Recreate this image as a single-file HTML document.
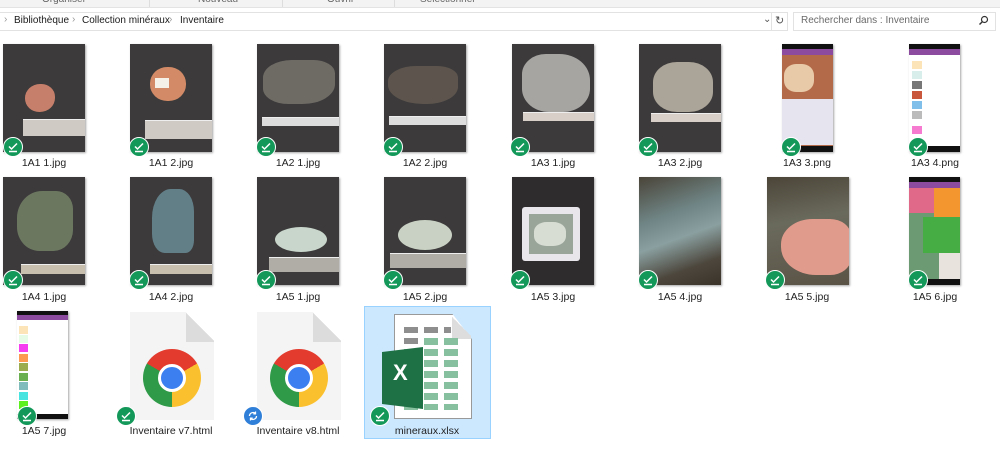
<!DOCTYPE html>
<html><head><meta charset="utf-8"><style>
body{margin:0;width:1000px;height:467px;background:#fff;position:relative;overflow:hidden;font-family:"Liberation Sans",sans-serif;font-size:11px;color:#1a1a1a}
.a{position:absolute}
.ph{position:absolute;width:82px;height:108px;background:#3c3a3b;overflow:hidden;box-shadow:1px 1px 2px rgba(0,0,0,.35)}
.ph div{position:absolute}
.rl{background:#cfcac4;border-top:1px solid #eee}
.lb{position:absolute;width:120px;text-align:center;font-size:10.5px;color:#222}
.bd{position:absolute;width:20px;height:20px;border-radius:50%;background:#13985a;border:1.5px solid #fff;box-sizing:border-box}
.bd svg{position:absolute;left:3px;top:3px}
.chrome{position:absolute;width:58px;height:58px;border-radius:50%;background:conic-gradient(from 0deg,#e33b2e 0 60deg,#fbc02d 60deg 180deg,#2f9a48 180deg 300deg,#e33b2e 300deg)}
.chrome::after{content:"";position:absolute;left:15px;top:15px;width:22px;height:22px;border-radius:50%;background:#3b7ff0;border:3.5px solid #fff}
.page{position:absolute;width:84px;height:108px;background:#f4f4f4;clip-path:polygon(0 0,66% 0,100% 28%,100% 100%,0 100%);box-shadow:0 1px 2px #aaa}
.fold{position:absolute;width:28px;height:30px;background:linear-gradient(225deg,transparent 50%,#dcdcdc 50%)}
.hd{position:absolute;top:15px;font-size:10px;white-space:nowrap}
.ar{position:absolute;top:14px;color:#999;font-size:10px}
</style></head><body>
<!-- toolbar -->
<div class="a" style="left:0;top:0;width:1000px;height:7px;background:#f3f3f3;border-bottom:1px solid #e3e3e3"></div>
<div class="a" style="left:42px;top:-6px;font-size:10px;color:#666">Organiser</div>
<div class="a" style="left:198px;top:-6px;font-size:10px;color:#666">Nouveau</div>
<div class="a" style="left:327px;top:-6px;font-size:10px;color:#666">Ouvrir</div>
<div class="a" style="left:420px;top:-6px;font-size:10px;color:#666">Sélectionner</div>
<div class="a" style="left:149px;top:0;width:1px;height:7px;background:#ddd"></div>
<div class="a" style="left:282px;top:0;width:1px;height:7px;background:#ddd"></div>
<div class="a" style="left:394px;top:0;width:1px;height:7px;background:#ddd"></div>
<!-- address -->
<div class="a" style="left:-1px;top:12px;width:787px;height:17px;border:1px solid #e2e2e2"></div>
<div class="ar" style="left:4px">›</div>
<div class="hd" style="left:14px">Bibliothèque</div>
<div class="ar" style="left:72px">›</div>
<div class="hd" style="left:82px">Collection minéraux</div>
<div class="ar" style="left:169px">›</div>
<div class="hd" style="left:180px">Inventaire</div>
<div class="a" style="left:763px;top:14px;color:#555;font-size:10px">⌄</div>
<div class="a" style="left:771px;top:12px;width:1px;height:19px;background:#e2e2e2"></div>
<div class="a" style="left:775px;top:14px;color:#555;font-size:11px">↻</div>
<div class="a" style="left:793px;top:12px;width:201px;height:17px;border:1px solid #e2e2e2"></div>
<div class="hd" style="left:801px;color:#6a6a6a">Rechercher dans : Inventaire</div>
<svg class="a" style="left:978px;top:15px" width="11" height="11" viewBox="0 0 11 11"><circle cx="6.5" cy="4.5" r="3" stroke="#333" stroke-width="1.2" fill="none"/><path d="M4.3 6.7L1.5 9.5" stroke="#333" stroke-width="1.4"/></svg>

<!-- selected -->
<div class="a" style="left:364px;top:306px;width:125px;height:131px;background:#cce8ff;border:1px solid #99d1ff"></div>

<!-- Row 1 -->
<div class="ph" style="left:3px;top:44px"><div style="left:22px;top:40px;width:30px;height:28px;border-radius:50% 45% 50% 48%;background:#c67f6a"></div><div class="rl" style="left:20px;top:75px;width:62px;height:16px"></div></div>
<div class="ph" style="left:130px;top:44px"><div style="left:20px;top:23px;width:36px;height:34px;border-radius:48%;background:#d28b66"></div><div style="left:25px;top:34px;width:14px;height:10px;background:#f5f0e8"></div><div class="rl" style="left:15px;top:76px;width:67px;height:18px"></div></div>
<div class="ph" style="left:257px;top:44px"><div style="left:6px;top:16px;width:72px;height:44px;border-radius:40% 30% 45% 35%;background:#6e6b65"></div><div class="rl" style="left:5px;top:73px;width:77px;height:8px;background:#ddd"></div></div>
<div class="ph" style="left:384px;top:44px"><div style="left:4px;top:22px;width:70px;height:38px;border-radius:40% 30% 45% 50%;background:#5d554d"></div><div class="rl" style="left:5px;top:72px;width:77px;height:8px;background:#ddd"></div></div>
<div class="ph" style="left:512px;top:44px"><div style="left:10px;top:10px;width:68px;height:58px;border-radius:35% 45% 40% 40%;background:#a7a5a2"></div><div class="rl" style="left:11px;top:68px;width:71px;height:8px;background:#d8d0c8"></div></div>
<div class="ph" style="left:639px;top:44px"><div style="left:14px;top:18px;width:60px;height:50px;border-radius:40%;background:#aba498"></div><div class="rl" style="left:12px;top:69px;width:70px;height:8px;background:#d8d0c8"></div></div>
<div class="ph" style="left:782px;top:44px;width:51px;background:#b26a48"><div style="left:0;top:0;width:51px;height:5px;background:#111"></div><div style="left:0;top:5px;width:51px;height:6px;background:#8d4ba0"></div><div style="left:2px;top:20px;width:30px;height:28px;background:#e8c9a8;border-radius:40%"></div><div style="left:0;top:55px;width:51px;height:46px;background:#e6e4ee"></div><div style="left:0;top:102px;width:51px;height:6px;background:#111"></div></div>
<div class="ph" style="left:909px;top:44px;width:51px;background:#fff"><div style="left:0;top:0;width:51px;height:5px;background:#111"></div><div style="left:0;top:5px;width:51px;height:6px;background:#8d4ba0"></div><div style="left:3px;top:17px;width:10px;height:8px;background:#fde3b8"></div><div style="left:3px;top:27px;width:10px;height:8px;background:#d8eeea"></div><div style="left:3px;top:37px;width:10px;height:8px;background:#777"></div><div style="left:3px;top:47px;width:10px;height:8px;background:#c9573c"></div><div style="left:3px;top:57px;width:10px;height:8px;background:#7fbfea"></div><div style="left:3px;top:67px;width:10px;height:8px;background:#bbb"></div><div style="left:3px;top:82px;width:10px;height:8px;background:#f57ad0"></div><div style="left:0;top:102px;width:51px;height:6px;background:#111"></div></div>
<!-- Row 2 -->
<div class="ph" style="left:3px;top:177px"><div style="left:14px;top:14px;width:56px;height:60px;border-radius:45% 30% 35% 40%;background:#6c7760"></div><div class="rl" style="left:18px;top:87px;width:64px;height:9px;background:#c8bfae"></div></div>
<div class="ph" style="left:130px;top:177px"><div style="left:22px;top:12px;width:42px;height:64px;border-radius:45% 35% 20% 30%;background:#627f88"></div><div class="rl" style="left:20px;top:87px;width:62px;height:9px;background:#c8bfae"></div></div>
<div class="ph" style="left:257px;top:177px"><div style="left:18px;top:50px;width:52px;height:25px;border-radius:50%;background:#c9d6cb"></div><div class="rl" style="left:12px;top:80px;width:70px;height:14px;background:#b0aca6"></div></div>
<div class="ph" style="left:384px;top:177px"><div style="left:14px;top:43px;width:54px;height:30px;border-radius:50%;background:#c8d1c3"></div><div class="rl" style="left:6px;top:76px;width:76px;height:14px;background:#b0aca6"></div></div>
<div class="ph" style="left:512px;top:177px;background:#2e2c2d"><div style="left:10px;top:30px;width:58px;height:54px;background:#e8e6ea;border-radius:3px"></div><div style="left:17px;top:37px;width:44px;height:40px;background:#9aa59a"></div><div style="left:22px;top:45px;width:32px;height:24px;background:#d8ddd4;border-radius:40%"></div></div>
<div class="ph" style="left:639px;top:177px;background:linear-gradient(160deg,#4a4439 0%,#6f8585 35%,#8aa0a0 55%,#4c463c 80%,#3a332a 100%)"></div>
<div class="ph" style="left:767px;top:177px;background:linear-gradient(170deg,#4b4538 0%,#6a6a5c 40%,#5a5346 100%)"><div style="left:14px;top:42px;width:70px;height:56px;border-radius:45% 30% 30% 50%;background:#e19b8c"></div></div>
<div class="ph" style="left:909px;top:177px;width:51px;background:#6c9a72"><div style="left:0;top:0;width:51px;height:5px;background:#111"></div><div style="left:0;top:5px;width:51px;height:6px;background:#8d4ba0"></div><div style="left:0;top:11px;width:30px;height:25px;background:#e0698a"></div><div style="left:25px;top:11px;width:26px;height:30px;background:#f3962f"></div><div style="left:14px;top:40px;width:37px;height:36px;background:#46ad45"></div><div style="left:30px;top:76px;width:21px;height:26px;background:#e8e3dd"></div><div style="left:0;top:102px;width:51px;height:6px;background:#111"></div></div>
<!-- Row 3 -->
<div class="ph" style="left:17px;top:311px;width:51px;background:#fff"><div style="left:0;top:0;width:51px;height:4px;background:#111"></div><div style="left:0;top:4px;width:51px;height:5px;background:#8d4ba0"></div><div style="left:2px;top:15px;width:9px;height:8px;background:#fde3b8"></div><div style="left:2px;top:24px;width:9px;height:8px;background:#e6fbe6"></div><div style="left:2px;top:33px;width:9px;height:8px;background:#f43ef0"></div><div style="left:2px;top:43px;width:9px;height:8px;background:#fb9a50"></div><div style="left:2px;top:52px;width:9px;height:8px;background:#9aac4e"></div><div style="left:2px;top:62px;width:9px;height:8px;background:#6aaf50"></div><div style="left:2px;top:71px;width:9px;height:8px;background:#80bcbc"></div><div style="left:2px;top:81px;width:9px;height:8px;background:#48e5e0"></div><div style="left:2px;top:90px;width:9px;height:8px;background:#5cf01f"></div><div style="left:0;top:103px;width:51px;height:5px;background:#111"></div></div>

<div class="page" style="left:130px;top:312px"></div><div class="fold" style="left:186px;top:312px"></div>
<div class="chrome" style="left:143px;top:349px"></div>
<div class="page" style="left:257px;top:312px"></div><div class="fold" style="left:313px;top:312px"></div>
<div class="chrome" style="left:270px;top:349px"></div>

<!-- excel -->
<div class="a" style="left:394px;top:314px;width:76px;height:103px;background:#fff;border:1px solid #999;clip-path:polygon(0 0,75% 0,100% 24%,100% 100%,0 100%)"></div>
<div class="a" style="left:452px;top:314px;width:19px;height:25px;background:linear-gradient(225deg,transparent 50%,#ddd 50%)"></div>
<div class="a" style="left:404px;top:327px;width:14px;height:6px;background:#8e8e8e"></div><div class="a" style="left:424px;top:327px;width:14px;height:6px;background:#8e8e8e"></div><div class="a" style="left:444px;top:327px;width:7px;height:6px;background:#8e8e8e"></div>
<div class="a" style="left:404px;top:338px;width:14px;height:6px;background:#8e8e8e"></div>
<div class="a" style="left:424px;top:338px;width:14px;height:72px;background:repeating-linear-gradient(180deg,#86c09f 0 7px,#fff 7px 11px)"></div>
<div class="a" style="left:444px;top:338px;width:14px;height:72px;background:repeating-linear-gradient(180deg,#86c09f 0 7px,#fff 7px 11px)"></div>
<div class="a" style="left:404px;top:349px;width:14px;height:61px;background:repeating-linear-gradient(180deg,#86c09f 0 7px,#fff 7px 11px)"></div>
<div class="a" style="left:382px;top:347px;width:41px;height:62px;background:#1e7145;clip-path:polygon(0 8%,100% 0,100% 100%,0 92%)"></div>
<div class="a" style="left:393px;top:360px;color:#fff;font-weight:bold;font-size:22px">X</div>

<!-- badges -->
<div class="bd" style="left:3px;top:137px"><svg width="12" height="12" viewBox="0 0 12 12"><path d="M2 5.5l2.5 2.5L10 2.5M2 10.5h8" stroke="#fff" stroke-width="1.5" fill="none"/></svg></div>
<div class="bd" style="left:129px;top:137px"><svg width="12" height="12" viewBox="0 0 12 12"><path d="M2 5.5l2.5 2.5L10 2.5M2 10.5h8" stroke="#fff" stroke-width="1.5" fill="none"/></svg></div>
<div class="bd" style="left:256px;top:137px"><svg width="12" height="12" viewBox="0 0 12 12"><path d="M2 5.5l2.5 2.5L10 2.5M2 10.5h8" stroke="#fff" stroke-width="1.5" fill="none"/></svg></div>
<div class="bd" style="left:383px;top:137px"><svg width="12" height="12" viewBox="0 0 12 12"><path d="M2 5.5l2.5 2.5L10 2.5M2 10.5h8" stroke="#fff" stroke-width="1.5" fill="none"/></svg></div>
<div class="bd" style="left:510px;top:137px"><svg width="12" height="12" viewBox="0 0 12 12"><path d="M2 5.5l2.5 2.5L10 2.5M2 10.5h8" stroke="#fff" stroke-width="1.5" fill="none"/></svg></div>
<div class="bd" style="left:638px;top:137px"><svg width="12" height="12" viewBox="0 0 12 12"><path d="M2 5.5l2.5 2.5L10 2.5M2 10.5h8" stroke="#fff" stroke-width="1.5" fill="none"/></svg></div>
<div class="bd" style="left:781px;top:137px"><svg width="12" height="12" viewBox="0 0 12 12"><path d="M2 5.5l2.5 2.5L10 2.5M2 10.5h8" stroke="#fff" stroke-width="1.5" fill="none"/></svg></div>
<div class="bd" style="left:908px;top:137px"><svg width="12" height="12" viewBox="0 0 12 12"><path d="M2 5.5l2.5 2.5L10 2.5M2 10.5h8" stroke="#fff" stroke-width="1.5" fill="none"/></svg></div>

<div class="bd" style="left:3px;top:270px"><svg width="12" height="12" viewBox="0 0 12 12"><path d="M2 5.5l2.5 2.5L10 2.5M2 10.5h8" stroke="#fff" stroke-width="1.5" fill="none"/></svg></div>
<div class="bd" style="left:129px;top:270px"><svg width="12" height="12" viewBox="0 0 12 12"><path d="M2 5.5l2.5 2.5L10 2.5M2 10.5h8" stroke="#fff" stroke-width="1.5" fill="none"/></svg></div>
<div class="bd" style="left:256px;top:270px"><svg width="12" height="12" viewBox="0 0 12 12"><path d="M2 5.5l2.5 2.5L10 2.5M2 10.5h8" stroke="#fff" stroke-width="1.5" fill="none"/></svg></div>
<div class="bd" style="left:383px;top:270px"><svg width="12" height="12" viewBox="0 0 12 12"><path d="M2 5.5l2.5 2.5L10 2.5M2 10.5h8" stroke="#fff" stroke-width="1.5" fill="none"/></svg></div>
<div class="bd" style="left:510px;top:270px"><svg width="12" height="12" viewBox="0 0 12 12"><path d="M2 5.5l2.5 2.5L10 2.5M2 10.5h8" stroke="#fff" stroke-width="1.5" fill="none"/></svg></div>
<div class="bd" style="left:638px;top:270px"><svg width="12" height="12" viewBox="0 0 12 12"><path d="M2 5.5l2.5 2.5L10 2.5M2 10.5h8" stroke="#fff" stroke-width="1.5" fill="none"/></svg></div>
<div class="bd" style="left:765px;top:270px"><svg width="12" height="12" viewBox="0 0 12 12"><path d="M2 5.5l2.5 2.5L10 2.5M2 10.5h8" stroke="#fff" stroke-width="1.5" fill="none"/></svg></div>
<div class="bd" style="left:908px;top:270px"><svg width="12" height="12" viewBox="0 0 12 12"><path d="M2 5.5l2.5 2.5L10 2.5M2 10.5h8" stroke="#fff" stroke-width="1.5" fill="none"/></svg></div>

<div class="bd" style="left:17px;top:406px"><svg width="12" height="12" viewBox="0 0 12 12"><path d="M2 5.5l2.5 2.5L10 2.5M2 10.5h8" stroke="#fff" stroke-width="1.5" fill="none"/></svg></div>
<div class="bd" style="left:116px;top:406px"><svg width="12" height="12" viewBox="0 0 12 12"><path d="M2 5.5l2.5 2.5L10 2.5M2 10.5h8" stroke="#fff" stroke-width="1.5" fill="none"/></svg></div>
<div class="bd" style="left:243px;top:406px;background:#2f7fd8"><svg width="12" height="12" viewBox="0 0 12 12"><path d="M2.5 6a3.5 3.5 0 0 1 6-2.4M9.5 6a3.5 3.5 0 0 1-6 2.4M8.5 1.5v2.3H6.3M3.5 10.5V8.2h2.2" stroke="#fff" stroke-width="1.3" fill="none"/></svg></div>
<div class="bd" style="left:370px;top:406px"><svg width="12" height="12" viewBox="0 0 12 12"><path d="M2 5.5l2.5 2.5L10 2.5M2 10.5h8" stroke="#fff" stroke-width="1.5" fill="none"/></svg></div>

<!-- labels -->
<div class="lb" style="left:-16px;top:157px">1A1 1.jpg</div>
<div class="lb" style="left:111px;top:157px">1A1 2.jpg</div>
<div class="lb" style="left:238px;top:157px">1A2 1.jpg</div>
<div class="lb" style="left:365px;top:157px">1A2 2.jpg</div>
<div class="lb" style="left:493px;top:157px">1A3 1.jpg</div>
<div class="lb" style="left:620px;top:157px">1A3 2.jpg</div>
<div class="lb" style="left:747px;top:157px">1A3 3.png</div>
<div class="lb" style="left:875px;top:157px">1A3 4.png</div>
<div class="lb" style="left:-16px;top:291px">1A4 1.jpg</div>
<div class="lb" style="left:111px;top:291px">1A4 2.jpg</div>
<div class="lb" style="left:238px;top:291px">1A5 1.jpg</div>
<div class="lb" style="left:365px;top:291px">1A5 2.jpg</div>
<div class="lb" style="left:493px;top:291px">1A5 3.jpg</div>
<div class="lb" style="left:620px;top:291px">1A5 4.jpg</div>
<div class="lb" style="left:747px;top:291px">1A5 5.jpg</div>
<div class="lb" style="left:875px;top:291px">1A5 6.jpg</div>
<div class="lb" style="left:-16px;top:425px">1A5 7.jpg</div>
<div class="lb" style="left:111px;top:425px">Inventaire v7.html</div>
<div class="lb" style="left:238px;top:425px">Inventaire v8.html</div>
<div class="lb" style="left:367px;top:425px">mineraux.xlsx</div>
</body></html>
